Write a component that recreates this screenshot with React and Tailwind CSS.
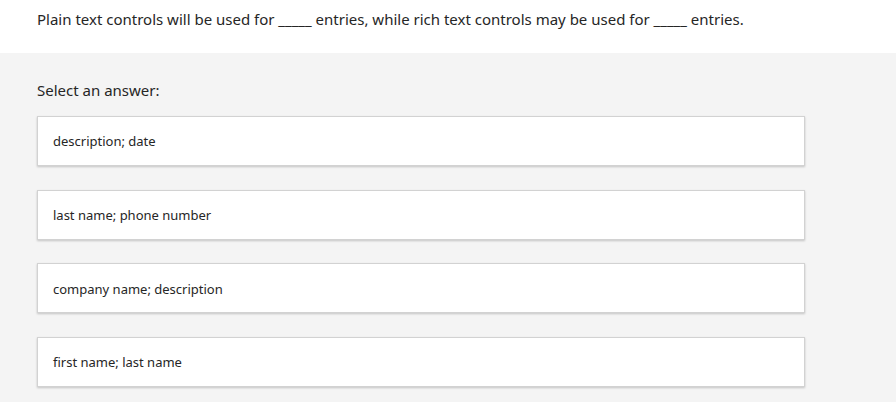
import React from "react";

const answers = [
  "description; date",
  "last name; phone number",
  "company name; description",
  "first name; last name",
];

function App() {
  return (
    <div
      className="min-h-screen bg-[#f4f4f4] text-[#262626]"
      style={{ fontFamily: '"Noto Sans", "Open Sans", sans-serif' }}
    >
      <div className="bg-white px-[37px] pt-[8px] h-[53px]">
        <p className="text-[15px] leading-[22px]">
          Plain text controls will be used for _____ entries, while rich text controls may be used for _____ entries.
        </p>
      </div>
      <div className="px-[37px] pt-[27px]">
        <p className="text-[15px] leading-[20px] mb-[16px]">Select an answer:</p>
        <div className="flex flex-col gap-[23.67px] w-[768px]">
          {answers.map((a) => (
            <div
              key={a}
              className="h-[50px] bg-white border border-[#d2d2d2] shadow-[0_1px_2px_rgba(0,0,0,0.2)] flex items-center px-[15px] pt-[2px] text-[13px]"
            >
              {a}
            </div>
          ))}
        </div>
      </div>
    </div>
  );
}

export default App;
